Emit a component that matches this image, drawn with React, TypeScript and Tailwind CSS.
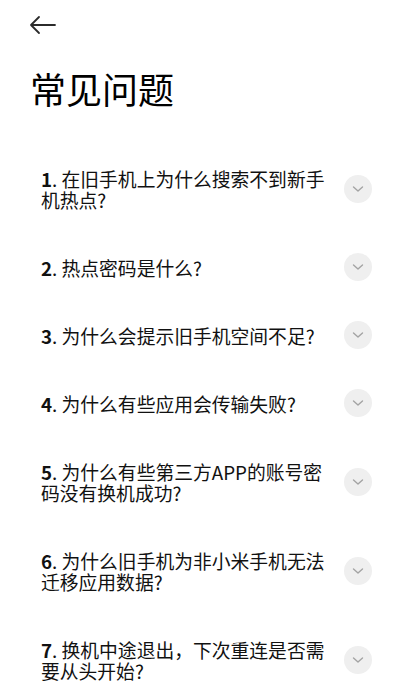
const faqs: { num: string; text: string }[] = [
  { num: '1', text: '在旧手机上为什么搜索不到新手机热点?' },
  { num: '2', text: '热点密码是什么?' },
  { num: '3', text: '为什么会提示旧手机空间不足?' },
  { num: '4', text: '为什么有些应用会传输失败?' },
  { num: '5', text: '为什么有些第三方APP的账号密码没有换机成功?' },
  { num: '6', text: '为什么旧手机为非小米手机无法迁移应用数据?' },
  { num: '7', text: '换机中途退出，下次重连是否需要从头开始?' },
]

function BackArrow() {
  return (
    <svg width="28" height="20" viewBox="0 0 28 20" fill="none">
      <path d="M2 10h24M10 2L2 10l8 8" stroke="#2b2b2b" strokeWidth="1.8" strokeLinecap="round" strokeLinejoin="round" />
    </svg>
  )
}

// round expand button; negative margin keeps it from growing the row
function Chevron() {
  return (
    <div className="w-[28px] h-[28px] -my-[4px] rounded-full bg-[#efefef] flex items-center justify-center shrink-0">
      <svg width="12" height="8" viewBox="0 0 12 8" fill="none">
        <path d="M1.5 2l4.5 4 4.5-4" stroke="#a3a3a3" strokeWidth="1.4" strokeLinecap="round" strokeLinejoin="round" />
      </svg>
    </div>
  )
}

export default function App() {
  return (
    <div className="w-[402px] h-[699px] bg-white overflow-hidden font-['Noto_Sans_CJK_SC','Noto_Sans',sans-serif] text-[#111]">
      <div className="h-[50px] flex items-center pl-[29px]">
        <BackArrow />
      </div>
      <h1 className="px-[30px] mt-[16px] text-[36px] leading-[44px] font-normal text-black">常见问题</h1>
      <ul className="mt-[34px] pl-[41px] pr-[30px]">
        {faqs.map((f) => (
          <li key={f.num} className="flex items-center py-[23.5px]">
            <p className="flex-1 pr-[10px] text-[18.8px] leading-[21px]">
              <span className="font-bold">{f.num}</span>. {f.text}
            </p>
            <Chevron />
          </li>
        ))}
      </ul>
    </div>
  )
}
